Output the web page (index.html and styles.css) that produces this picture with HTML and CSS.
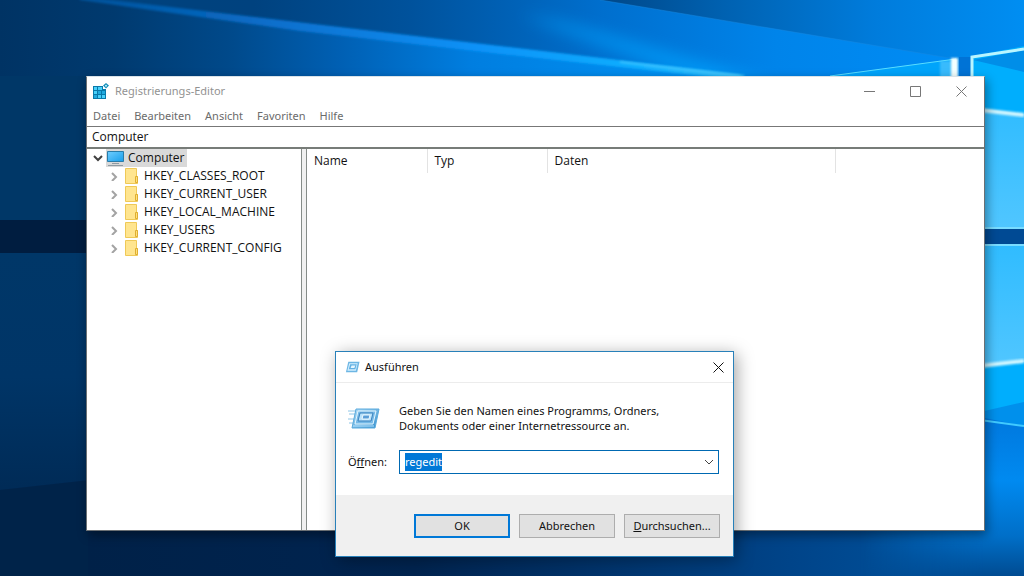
FILE: index.html
```html
<!DOCTYPE html>
<html lang="de">
<head>
<meta charset="utf-8">
<meta name="viewport" content="width=device-width, initial-scale=1">
<title>Registrierungs-Editor</title>
<link rel="stylesheet" href="styles.css">
</head>
<body>
<svg class="wallpaper" viewBox="0 0 1024 576" preserveAspectRatio="none" aria-hidden="true">
  <defs>
    <linearGradient id="mid" gradientUnits="userSpaceOnUse" x1="80" y1="0" x2="950" y2="0"><stop offset="0" stop-color="#00427c"/><stop offset=".2" stop-color="#00427f"/><stop offset=".38" stop-color="#00529c"/><stop offset=".6" stop-color="#006fce"/><stop offset=".8" stop-color="#0084ea"/><stop offset="1" stop-color="#008cf4"/></linearGradient>
    <linearGradient id="sky" gradientUnits="userSpaceOnUse" x1="600" y1="0" x2="1024" y2="0"><stop offset="0" stop-color="#004788"/><stop offset=".3" stop-color="#0062b2"/><stop offset=".65" stop-color="#007cdc"/><stop offset="1" stop-color="#008ef2"/></linearGradient>
    <linearGradient id="low" gradientUnits="userSpaceOnUse" x1="0" y1="0" x2="760" y2="0"><stop offset="0" stop-color="#003364"/><stop offset=".15" stop-color="#003a6f"/><stop offset=".3" stop-color="#00498a"/><stop offset=".45" stop-color="#0060b4"/><stop offset=".62" stop-color="#007ee0"/><stop offset="1" stop-color="#0098fa"/></linearGradient>
    <linearGradient id="beam" gradientUnits="userSpaceOnUse" x1="70" y1="0" x2="750" y2="0"><stop offset="0" stop-color="#004f96"/><stop offset=".3" stop-color="#0a6fcc"/><stop offset=".6" stop-color="#0892f8"/><stop offset=".85" stop-color="#12b0ff"/><stop offset="1" stop-color="#38c4ff"/></linearGradient>
    <linearGradient id="left" x2="0" y2="1"><stop offset="0" stop-color="#003768"/><stop offset=".5" stop-color="#003567"/><stop offset="1" stop-color="#002a55"/></linearGradient>
    <linearGradient id="floor"><stop offset="0" stop-color="#002148"/><stop offset=".35" stop-color="#002450"/><stop offset=".75" stop-color="#004489"/><stop offset="1" stop-color="#0058a6"/></linearGradient>
    <linearGradient id="right" x2="0" y2="1"><stop offset="0" stop-color="#0078de"/><stop offset=".4" stop-color="#008af0"/><stop offset=".75" stop-color="#006fc8"/><stop offset="1" stop-color="#004b91"/></linearGradient>
    <linearGradient id="fade" gradientUnits="userSpaceOnUse" x1="860" y1="0" x2="985" y2="0"><stop offset="0" stop-color="#fff" stop-opacity="0"/><stop offset="1" stop-color="#fff"/></linearGradient>
    <mask id="blend"><path d="M800 400H1024V576H800Z" fill="url(#fade)"/></mask>
    <linearGradient id="pane" x2="0" y2="1"><stop offset="0" stop-color="#30bcff"/><stop offset="1" stop-color="#50c6ff"/></linearGradient>
    <filter id="haze" x="-30%" y="-80%" width="160%" height="260%"><feGaussianBlur stdDeviation="8"/></filter>
    <filter id="glow" x="-100%" y="-50%" width="300%" height="200%"><feGaussianBlur stdDeviation="1"/></filter>
  </defs>
  <rect width="1024" height="576" fill="url(#sky)"/>
  <path d="M0 0H600L950 58V120H0Z" fill="url(#mid)"/>
  <path d="M520 15 560 22 780 84H710Z" fill="#00a4ff" opacity=".7" filter="url(#haze)"/>
  <path d="M0-10 80-3 745 78H0Z" fill="url(#low)"/>
  <path d="M78-4 745 75 740 80 500 54 300 31 80 0Z" fill="url(#beam)" filter="url(#glow)"/>
  <path d="M620 62 740 76" stroke="#4ecaff" stroke-width="2" opacity=".7" filter="url(#glow)"/>
  <path d="M600 0 950 58" stroke="#1788e0" stroke-width="1" opacity=".5"/>
  <path d="M830 76 955 59V90H830Z" fill="#00a4fb"/>
  <path d="M830 76 956 59" stroke="#59ddff" stroke-width="1"/>
  <path d="M0 76H90V221H0Z" fill="#003767"/>
  <path d="M0 253H90V500H0Z" fill="url(#left)"/>
  <path d="M0 220H90V253H0Z" fill="#001d40"/>
  <path d="M0 490 90 480V576H0Z" fill="#002349"/>
  <path d="M88 525H1024V576H88Z" fill="url(#floor)"/>
  <path d="M973 56 1024 46V440H973Z" fill="#00aefd"/>
  <path d="M973 60 1024 72V50Z" fill="#008ee8"/>
  <path d="M980 108 1024 114V228H980Z" fill="url(#pane)"/>
  <path d="M980 245H1024V362L980 366Z" fill="url(#pane)"/>
  <path d="M980 110 1024 115" stroke="#d2f7ff" stroke-width="4" filter="url(#glow)"/>
  <path d="M980 366 1024 361" stroke="#d2f7ff" stroke-width="4" filter="url(#glow)"/>
  <path d="M980 229H1024V245H980Z" fill="#004a94"/>
  <path d="M980 228H1024M980 245H1024" stroke="#79dcff" stroke-width="2"/>
  <path d="M980 412 1024 402V426L980 420Z" fill="#0090ec"/>
  <path d="M850 417H980L1024 426V576H850Z" fill="url(#right)" mask="url(#blend)"/>
  <path d="M980 420 1024 426" stroke="#40caff" stroke-width="2"/>
  <path d="M940 61h14v24h-14z" fill="#6fd3ff" opacity=".5" filter="url(#glow)"/>
  <path d="M951 58h7v28h-7z" fill="#f2ffff" filter="url(#glow)"/>
  <path d="M955 40v20" stroke="#30bfff" stroke-width="3" opacity=".5" filter="url(#glow)"/>
  <path d="M959 57h12v28h-12z" fill="#0073d6"/>
  <path d="M972 90V57L1024 49" fill="none" stroke="#b9f5ff" stroke-width="3"/>
</svg>

<main class="editor" aria-label="Registrierungs-Editor">
  <header class="titlebar">
    <svg class="app-icon" viewBox="0 0 16 16" aria-hidden="true">
      <path d="M0 3h10v3h3v10H0z" fill="#0879aa"/>
      <path d="M1 4h3v3H1zM5 4h4v3H5zM1 8h3v3H1zM5 12h3v3H5zM9 12h3v3H9z" fill="#48d0fa"/>
      <path d="M5 8h3v3H5zM9 8h3v3H9zM1 12h3v3H1z" fill="#20a9de"/>
      <path d="m13 0 3 2.500-3 3-3-3z" fill="#168fb9"/><circle cx="13" cy="2.700" r="1" fill="#bdefff"/>
    </svg>
    <h1 class="title">Registrierungs-Editor</h1>
    <button class="win-btn" aria-label="Minimieren"><svg viewBox="0 0 11 11"><path d="M0 5.500h11"/></svg></button>
    <button class="win-btn" aria-label="Maximieren"><svg viewBox="0 0 11 11"><path d="M.5.500h10v10H.5z"/></svg></button>
    <button class="win-btn" aria-label="Schließen"><svg viewBox="0 0 11 11"><path d="m.5.500 10 10m0-10-10 10"/></svg></button>
  </header>
  <nav class="menu">
    <button>Datei</button><button>Bearbeiten</button><button>Ansicht</button><button>Favoriten</button><button>Hilfe</button>
  </nav>
  <input class="address" aria-label="Pfad" value="Computer">
  <div class="panes">
    <ul class="tree">
      <li class="root">
        <svg class="chevron open" viewBox="0 0 10 10" aria-hidden="true"><path d="m1 3 4 4 4-4"/></svg>
        <span class="selected">
          <svg class="pc" viewBox="0 0 17 16" aria-hidden="true"><defs><linearGradient id="screen" x2="1" y2="1"><stop stop-color="#70ceff"/><stop offset="1" stop-color="#189eeb"/></linearGradient></defs><path d="M.5 1.500h16v10H.5z" fill="url(#screen)" stroke="#297ca9"/><path d="M5 13.500h7M1 15.500h15" stroke="#8f9ba3"/></svg>
          Computer
        </span>
      </li>
      <li class="key"><svg class="chevron" viewBox="0 0 10 10" aria-hidden="true"><path d="m3 2 4 4-4 4"/></svg><svg class="folder" viewBox="0 0 13 16" aria-hidden="true"><path d="M.5.500h11v8h1v7H.5z" fill="#ffe58f" stroke="#efc957"/><path d="M10.500 8.500h2v6h-2z" fill="#ffe17d" stroke="#dfae31"/></svg>HKEY_CLASSES_ROOT</li>
      <li class="key"><svg class="chevron" viewBox="0 0 10 10" aria-hidden="true"><path d="m3 2 4 4-4 4"/></svg><svg class="folder" viewBox="0 0 13 16" aria-hidden="true"><path d="M.5.500h11v8h1v7H.5z" fill="#ffe58f" stroke="#efc957"/><path d="M10.500 8.500h2v6h-2z" fill="#ffe17d" stroke="#dfae31"/></svg>HKEY_CURRENT_USER</li>
      <li class="key"><svg class="chevron" viewBox="0 0 10 10" aria-hidden="true"><path d="m3 2 4 4-4 4"/></svg><svg class="folder" viewBox="0 0 13 16" aria-hidden="true"><path d="M.5.500h11v8h1v7H.5z" fill="#ffe58f" stroke="#efc957"/><path d="M10.500 8.500h2v6h-2z" fill="#ffe17d" stroke="#dfae31"/></svg>HKEY_LOCAL_MACHINE</li>
      <li class="key"><svg class="chevron" viewBox="0 0 10 10" aria-hidden="true"><path d="m3 2 4 4-4 4"/></svg><svg class="folder" viewBox="0 0 13 16" aria-hidden="true"><path d="M.5.500h11v8h1v7H.5z" fill="#ffe58f" stroke="#efc957"/><path d="M10.500 8.500h2v6h-2z" fill="#ffe17d" stroke="#dfae31"/></svg>HKEY_USERS</li>
      <li class="key"><svg class="chevron" viewBox="0 0 10 10" aria-hidden="true"><path d="m3 2 4 4-4 4"/></svg><svg class="folder" viewBox="0 0 13 16" aria-hidden="true"><path d="M.5.500h11v8h1v7H.5z" fill="#ffe58f" stroke="#efc957"/><path d="M10.500 8.500h2v6h-2z" fill="#ffe17d" stroke="#dfae31"/></svg>HKEY_CURRENT_CONFIG</li>
    </ul>
    <div class="splitter"></div>
    <div class="values">
      <table>
        <thead><tr><th class="col">Name</th><th class="col">Typ</th><th class="col wide">Daten</th></tr></thead>
      </table>
    </div>
  </div>
</main>

<form class="run" role="dialog" aria-labelledby="run-title">
  <header class="run-bar">
    <svg class="run-small" viewBox="0 0 32 24" aria-hidden="true"><path d="M7 1h24l-5 22H2z" fill="#6db6e4"/><path d="M9 4h18l-4 16H5z" fill="#d4efff"/><path d="M11 6h14l-3 11H8z" fill="#63b0e2"/><path d="M14 9h8l-2 5h-8z" fill="#e7f7ff"/></svg>
    <h2 class="run-title" id="run-title">Ausführen</h2>
    <button class="close" type="button" aria-label="Schließen"><svg viewBox="0 0 11 11"><path d="m.5.500 10 10m0-10-10 10"/></svg></button>
  </header>
  <div class="run-body">
    <svg class="run-icon" viewBox="0 0 32 24" aria-hidden="true">
      <defs><linearGradient id="metal" x2="1" y2="1"><stop stop-color="#b4e0f9"/><stop offset="1" stop-color="#318dcc"/></linearGradient></defs>
      <path d="M0 5h9M1 8h7M0 13h6M1 17h5" stroke="#8ec5e7"/>
      <path d="M8 3h23l-4 19H4z" fill="url(#metal)" stroke="#5aaadd"/>
      <path d="M10 5h18l-3 13H7z" fill="#75b9e7" stroke="#e4f6ff"/>
      <path d="M12 7h13l-2 8H10z" fill="#b8e2fb" stroke="#3c83be"/>
      <path d="M15 9h7l-1 4h-7z" fill="#5a9ed7" stroke="#eefaff"/>
      <path d="M5 20h21" stroke="#b5e3ff"/>
    </svg>
    <p class="hint">Geben Sie den Namen eines Programms, Ordners, Dokuments oder einer Internetressource an.</p>
    <label class="label" for="command">Ö<u>f</u>fnen:</label>
    <div class="combo">
      <input id="command" value="regedit" autocomplete="off" spellcheck="false">
      <button type="button" aria-label="Verlauf anzeigen"><svg viewBox="0 0 10 6"><path d="m1 1 4 4 4-4"/></svg></button>
    </div>
  </div>
  <footer class="actions">
    <button class="btn default" type="button">OK</button>
    <button class="btn" type="button">Abbrechen</button>
    <button class="btn" type="button"><u>D</u>urchsuchen...</button>
  </footer>
</form>
<script src="script.js"></script>
</body>
</html>
```
FILE: styles.css
```css
* { box-sizing: border-box; }
body {
  margin: 0;
  min-height: 100vh;
  overflow: hidden;
  font: 12px/18px "Open Sans", "Noto Sans", sans-serif;
  color: #111;
}
button, input { font: inherit; color: inherit; }
button { padding: 0; border: 0; background: none; }
svg { flex: none; }
.wallpaper { position: absolute; inset: 0; width: 100%; height: 100%; }

.editor {
  position: absolute;
  top: 76px; right: 39px; bottom: 45px; left: 86px;
  display: flex;
  flex-direction: column;
  background: #fff;
  border: 1px solid #6b7074;
  border-top-color: #d9e2e8;
  box-shadow: 2px 4px 10px rgba(0, 0, 0, .4);
}
.titlebar, .menu, .run { font-family: "Noto Sans", "Open Sans", sans-serif; font-size: 11px; }
.titlebar { display: flex; align-items: center; height: 28px; padding-left: 6px; }
.app-icon { width: 16px; height: 16px; }
.title { flex: 1; margin: 0 0 0 6px; font-size: 11px; font-weight: 400; color: #929292; }
.win-btn { width: 46px; height: 26px; display: flex; justify-content: center; align-items: center; }
.win-btn svg, .close svg { width: 11px; height: 11px; fill: none; stroke: #777; }
.menu { display: flex; gap: 14px; height: 21px; padding: 2px 6px; color: #6b6b6b; }
.address {
  width: 100%;
  height: 23px;
  padding: 0 5px 2px;
  border: 0;
  border-top: 1px solid #777;
  border-bottom: 2px solid #777c78;
  border-radius: 0;
  background: #fff;
}
.panes { display: flex; flex: 1; min-height: 0; }
.tree { width: 215px; margin: 0; padding: 0 0 0 6px; list-style: none; border-right: 1px solid #858b88; }
.root, .key { display: flex; align-items: center; height: 18px; }
.chevron { width: 10px; height: 10px; fill: none; stroke: #a3a3a3; stroke-width: 2; }
.chevron.open { stroke: #404040; }
.selected { display: flex; align-items: center; gap: 4px; height: 18px; margin-left: 3px; padding: 0 2px 0 1px; background: #d9d9d9; }
.pc { width: 17px; height: 16px; }
.key { padding-left: 16px; }
.folder { width: 13px; height: 16px; margin: 0 6px; }
.splitter { width: 5px; background: #f0f0f0; border-right: 1px solid #858b88; }
.values { flex: 1; }
.values table { border-collapse: collapse; }
.col { width: 120px; height: 24px; padding: 0 7px; border-right: 1px solid #e3e3e3; font-weight: 400; text-align: left; }
.col.wide { width: 288px; }

.run {
  position: absolute;
  top: 351px; left: 335px;
  width: 399px;
  background: #fff;
  border: 1px solid #2880b9;
  box-shadow: 3px 3px 16px rgba(0, 0, 0, .35);
}
.run-bar { display: flex; align-items: center; height: 31px; padding-left: 9px; border-bottom: 1px solid #ececec; }
.run-small { width: 15px; height: 12px; }
.run-title { flex: 1; margin: 0 0 0 5px; font-size: 11px; font-weight: 400; }
.close { display: flex; justify-content: center; align-items: center; width: 30px; height: 28px; }
.close svg { stroke: #111; }
.run-body {
  display: grid;
  grid-template-columns: 51px 1fr;
  align-items: center;
  row-gap: 17px;
  padding: 20px 14px 21px 12px;
}
.run-icon { width: 32px; height: 24px; }
.hint { margin: 0; max-width: 290px; line-height: 15px; }
.combo { display: flex; height: 24px; border: 1px solid #0069b2; }
.combo input { flex: 1; min-width: 0; padding: 0 5px; border: 0; outline: 0; background: #fff; }
.combo input::selection { background: #0078d7; color: #fff; }
.combo button { width: 18px; display: flex; justify-content: center; align-items: center; }
.combo svg { width: 10px; height: 6px; fill: none; stroke: #444; }
.actions { display: flex; justify-content: flex-end; gap: 9px; padding: 19px 13px 18px; background: #f0f0f0; }
.btn { width: 96px; height: 24px; background: #e1e1e1; border: 1px solid #adadad; }
.btn.default { border: 2px solid #0078d7; }
```
FILE: script.js
```js
const command = document.getElementById("command");
command.focus();
command.select();
```
